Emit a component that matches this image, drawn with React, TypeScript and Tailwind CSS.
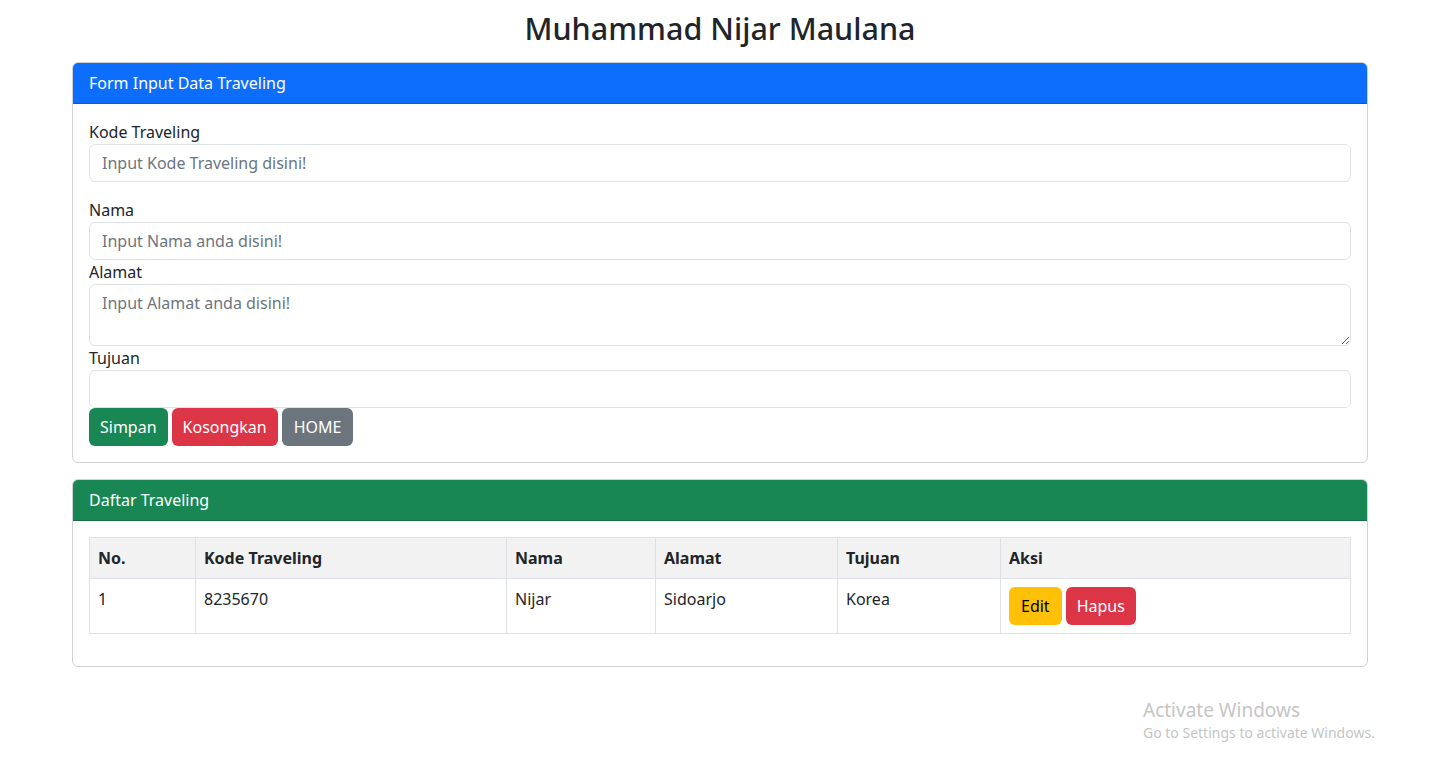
import { useState } from 'react'

type Trip = {
    kode: string
    nama: string
    alamat: string
    tujuan: string
}

const trips: Trip[] = [
    { kode: '8235670', nama: 'Nijar', alamat: 'Sidoarjo', tujuan: 'Korea' },
]

const inputClass =
    'block w-full h-[38px] rounded-[6px] border border-[#dee2e6] bg-white px-3 py-1.5 text-base leading-6 text-[#212529] placeholder:text-[#6c757d] outline-none'

export default function App() {
    const [kode, setKode] = useState('')
    const [nama, setNama] = useState('')
    const [alamat, setAlamat] = useState('')
    const [tujuan, setTujuan] = useState('')

    const kosongkan = () => {
        setKode('')
        setNama('')
        setAlamat('')
        setTujuan('')
    }

    return (
        <div className="relative min-h-[778px] bg-white text-base leading-6 text-[#212529] font-['Noto_Sans',sans-serif]">
            <div className="mx-auto max-w-[1320px] px-3 pt-[9px]">
                <h2 className="text-center text-[30.5px] font-medium leading-[38px] mb-[15px]">Muhammad Nijar Maulana</h2>

                <div className="rounded-[6px] border border-black/[.175] overflow-hidden">
                    <div className="bg-[#0d6efd] text-white px-4 py-2 border-b border-black/[.175]">Form Input Data Traveling</div>
                    <div className="p-4">
                        <div className="mb-4">
                            <label className="block">Kode Traveling</label>
                            <input className={inputClass} value={kode} onChange={e => setKode(e.target.value)} placeholder="Input Kode Traveling disini!" />
                        </div>
                        <label className="block">Nama</label>
                        <input className={inputClass} value={nama} onChange={e => setNama(e.target.value)} placeholder="Input Nama anda disini!" />
                        <label className="block">Alamat</label>
                        <textarea
                            rows={2}
                            className="block w-full h-[62px] rounded-[6px] border border-[#dee2e6] bg-white px-3 py-1.5 text-base leading-6 text-[#212529] placeholder:text-[#6c757d] outline-none"
                            value={alamat}
                            onChange={e => setAlamat(e.target.value)}
                            placeholder="Input Alamat anda disini!"
                        />
                        <label className="block">Tujuan</label>
                        <input className={inputClass} value={tujuan} onChange={e => setTujuan(e.target.value)} />
                        <div className="flex gap-1">
                            <button className="h-[38px] rounded-[6px] bg-[#198754] px-[11px] text-white">Simpan</button>
                            <button onClick={kosongkan} className="h-[38px] rounded-[6px] bg-[#dc3545] px-[11px] text-white">Kosongkan</button>
                            <button className="h-[38px] rounded-[6px] bg-[#6c757d] px-3 text-white">HOME</button>
                        </div>
                    </div>
                </div>

                <div className="mt-4 rounded-[6px] border border-black/[.175] overflow-hidden">
                    <div className="bg-[#198754] text-white px-4 py-2 border-b border-black/[.175]">Daftar Traveling</div>
                    <div className="p-4">
                        <table className="w-full border-collapse border border-[#dee2e6] mb-4">
                            <thead>
                                <tr className="bg-[#f2f2f2]">
                                    <th className="w-[106px] border border-[#dee2e6] p-2 text-left align-top font-bold">No.</th>
                                    <th className="w-[311px] border border-[#dee2e6] p-2 text-left align-top font-bold">Kode Traveling</th>
                                    <th className="w-[149px] border border-[#dee2e6] p-2 text-left align-top font-bold">Nama</th>
                                    <th className="w-[182px] border border-[#dee2e6] p-2 text-left align-top font-bold">Alamat</th>
                                    <th className="w-[163px] border border-[#dee2e6] p-2 text-left align-top font-bold">Tujuan</th>
                                    <th className="border border-[#dee2e6] p-2 text-left align-top font-bold">Aksi</th>
                                </tr>
                            </thead>
                            <tbody>
                                {trips.map((t, i) => (
                                    <tr key={t.kode}>
                                        <td className="border border-[#dee2e6] p-2 align-top">{i + 1}</td>
                                        <td className="border border-[#dee2e6] p-2 align-top">{t.kode}</td>
                                        <td className="border border-[#dee2e6] p-2 align-top">{t.nama}</td>
                                        <td className="border border-[#dee2e6] p-2 align-top">{t.alamat}</td>
                                        <td className="border border-[#dee2e6] p-2 align-top">{t.tujuan}</td>
                                        <td className="border border-[#dee2e6] p-2 align-top">
                                            <div className="flex gap-1">
                                                <button className="h-[38px] rounded-[6px] bg-[#ffc107] px-3 text-black">Edit</button>
                                                <button className="h-[38px] rounded-[6px] bg-[#dc3545] px-[11px] text-white">Hapus</button>
                                            </div>
                                        </td>
                                    </tr>
                                ))}
                            </tbody>
                        </table>
                    </div>
                </div>
            </div>

            {/* windows watermark */}
            <div className="absolute left-[1143px] top-[697px] text-[#c5c5c5] pointer-events-none">
                <div className="text-[19px] leading-[26px]">Activate Windows</div>
                <div className="text-[14px] leading-[20px]">Go to Settings to activate Windows.</div>
            </div>
        </div>
    )
}
